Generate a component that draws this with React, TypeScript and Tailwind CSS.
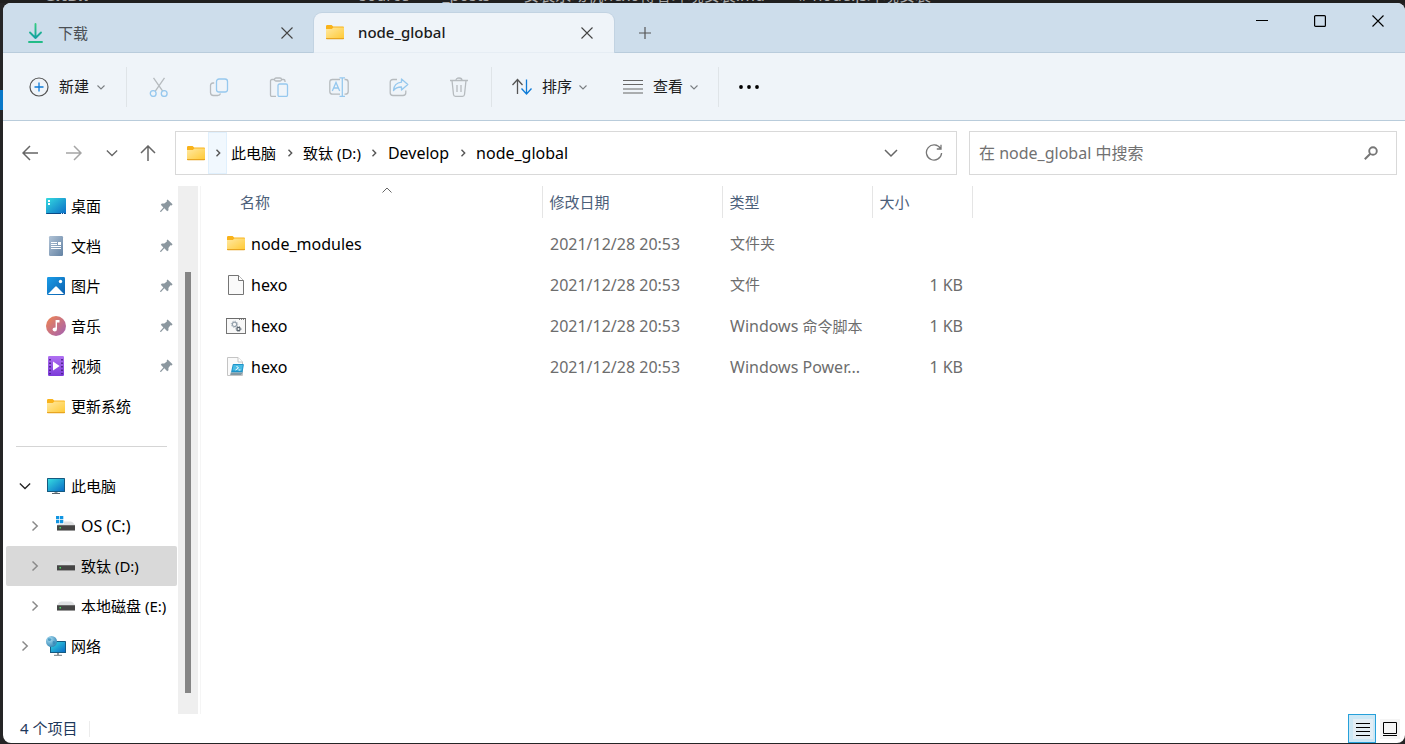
import React from 'react';

interface IconProps {
  className?: string;
}

interface PlaceItem {
  label: string;
  icon: React.ReactNode;
  pinned?: boolean;
  latin?: boolean;
}

interface TreeItem extends PlaceItem {
  level: number;
  open?: boolean;
  selected?: boolean;
}

interface FileRow {
  name: string;
  icon: React.ReactNode;
  date: string;
  type: React.ReactNode;
  size: string;
}

function FolderIcon({ className = '' }: IconProps) {
  return (
    <svg width="18" height="15" viewBox="0 0 18 15" className={`shrink-0 ${className}`}>
      <defs>
        <linearGradient id="folder" x1="0" y1="0" x2="1" y2="1">
          <stop offset="0" stopColor="#ffe9a3" />
          <stop offset="1" stopColor="#ffc933" />
        </linearGradient>
      </defs>
      <path d="M0 1.2Q0 0 1.2 0H5.6L7.2 1.4H17Q18 1.4 18 2.4V6H0Z" fill="#f9b31b" />
      <path d="M0 4H5.8L7.4 2.4H18V14H0Z" fill="url(#folder)" />
      <path d="M0 13h18v.6q0 .6-.8.6H.8Q0 14.200 0 13.600Z" fill="#e8a520" />
    </svg>
  );
}

function DownloadIcon() {
  return (
    <svg width="16" height="20" viewBox="0 0 16 20" fill="none" className="shrink-0">
      <defs>
        <linearGradient id="down" x1="0" y1="0" x2="0" y2="20" gradientUnits="userSpaceOnUse">
          <stop offset="0" stopColor="#37cf7f" />
          <stop offset=".75" stopColor="#12a0a0" />
          <stop offset="1" stopColor="#26c281" />
        </linearGradient>
      </defs>
      <path d="M7.500 1V15M2 9.500L7.500 15L13 9.500M1 19H14" stroke="url(#down)" strokeWidth="1.900" strokeLinecap="round" strokeLinejoin="round" />
    </svg>
  );
}

function CloseIcon({ className = '' }: IconProps) {
  return (
    <svg width="12" height="12" viewBox="0 0 12 12" className={className}>
      <path d="M.5.5L11.500 11.500M11.500.5L.5 11.500" stroke="currentColor" strokeWidth="1.100" fill="none" />
    </svg>
  );
}

function SmallChevron() {
  return (
    <svg width="10" height="10" viewBox="0 0 10 10" fill="none">
      <path d="M1.500 3.500L5 7L8.500 3.500" stroke="#7b7f83" strokeWidth="1.100" />
    </svg>
  );
}

function ChevronDown({ className = '' }: IconProps) {
  return (
    <svg width="14" height="14" viewBox="0 0 14 14" fill="none" className={className}>
      <path d="M1 4L7 10L13 4" stroke="currentColor" strokeWidth="1.500" />
    </svg>
  );
}

function ChevronRight({ className = '' }: IconProps) {
  return (
    <svg width="10" height="12" viewBox="0 0 10 12" fill="none" className={className}>
      <path d="M2.500 1.500L7.200 6L2.500 10.500" stroke="currentColor" strokeWidth="1.500" />
    </svg>
  );
}

function CrumbChevron() {
  return (
    <svg width="8" height="8" viewBox="0 0 8 8" fill="none">
      <path d="M2.500 .8L5.700 4L2.500 7.200" stroke="#555" strokeWidth="1.400" />
    </svg>
  );
}

function PinIcon() {
  return (
    <svg width="13" height="14" viewBox="0 0 13 14" className="shrink-0">
      <path d="M7.600 .6L12.600 5.200L11.600 6.400L10.400 6.300L8.400 9L8.500 11.200L7.200 12.200L4.300 9.300L1 13L.2 12.900L.2 12.100L3.400 8.500L.8 5.800L1.900 4.600L4.300 4.500L6.900 2.600L6.700 1.500Z" fill="#8b979f" />
    </svg>
  );
}

function DesktopIcon() {
  return (
    <svg width="20" height="20" viewBox="0 0 20 20">
      <defs>
        <linearGradient id="desk" x1="0" y1="0" x2="1" y2="1">
          <stop offset="0" stopColor="#35dbe0" />
          <stop offset="1" stopColor="#0a6cc6" />
        </linearGradient>
      </defs>
      <rect y="2" width="20" height="16" rx="1" fill="url(#desk)" />
      <path d="M0 17H20q0 1-1 1H1q-1 0-1-1Z" fill="#0b4a86" />
      <path d="M2 4h2v2H2zM2 7h2v2H2z" fill="#fff" />
      <path d="M15 17h1v1h-1zM17 17h1v1h-1z" fill="#cfe6ff" />
    </svg>
  );
}

function DocumentsIcon() {
  return (
    <svg width="20" height="20" viewBox="0 0 20 20">
      <defs>
        <linearGradient id="docs" x1="0" y1="0" x2="1" y2="1">
          <stop offset="0" stopColor="#b1c3d6" />
          <stop offset="1" stopColor="#6382a3" />
        </linearGradient>
      </defs>
      <rect x="3" width="14" height="20" rx="1.200" fill="url(#docs)" />
      <path d="M5 6h6v1H5zM5 8h6v1H5zM12 6h3v3h-3zM5 10h10v1H5zM5 12h10v1H5z" fill="#fff" />
    </svg>
  );
}

function PicturesIcon() {
  return (
    <svg width="20" height="20" viewBox="0 0 20 20">
      <defs>
        <linearGradient id="pics" x1="0" y1="0" x2="1" y2="1">
          <stop offset="0" stopColor="#1a9ce8" />
          <stop offset="1" stopColor="#0b60ae" />
        </linearGradient>
      </defs>
      <rect x="1" y="1" width="18" height="18" rx="1.200" fill="url(#pics)" />
      <circle cx="14.500" cy="5.500" r="1.700" fill="#fff" />
      <path d="M2 18L9.200 10.700Q10 10 10.800 10.700L18 18Z" fill="#fff" />
    </svg>
  );
}

function MusicIcon() {
  return (
    <svg width="20" height="20" viewBox="0 0 20 20">
      <defs>
        <linearGradient id="music" x1="0" y1="0" x2="1" y2="1">
          <stop offset="0" stopColor="#f1854f" />
          <stop offset="1" stopColor="#a160b4" />
        </linearGradient>
      </defs>
      <circle cx="10" cy="10" r="10" fill="url(#music)" />
      <path d="M9.600 4H13.500V6.400H11V13Q11 15.500 8.600 15.500Q6.500 15.400 6.500 13.300Q6.700 11.200 9.600 11.400Z" fill="#fff" />
    </svg>
  );
}

function VideosIcon() {
  return (
    <svg width="20" height="20" viewBox="0 0 20 20">
      <defs>
        <linearGradient id="video" x1="0" y1="0" x2="0" y2="1">
          <stop offset="0" stopColor="#b070f2" />
          <stop offset="1" stopColor="#7c3bd9" />
        </linearGradient>
      </defs>
      <rect x="2" width="16" height="20" rx="1.200" fill="url(#video)" />
      <path d="M3.200 3h1.600v1.600H3.200zM3.200 6.500h1.600v1.600H3.200zM3.200 10h1.600v1.600H3.200zM3.200 13.500h1.600v1.600H3.200zM3.200 17h1.600v1.200H3.200zM15.200 3h1.600v1.600h-1.600zM15.200 6.500h1.600v1.600h-1.600zM15.200 10h1.600v1.600h-1.600zM15.200 13.500h1.600v1.600h-1.600zM15.200 17h1.600v1.200h-1.600z" fill="#42207c" />
      <path d="M7 5.500V14.500L13.700 10Z" fill="#fff" />
    </svg>
  );
}

function ComputerIcon() {
  return (
    <svg width="20" height="20" viewBox="0 0 20 20">
      <rect x="1" y="2" width="18" height="14" rx=".6" fill="#155a80" />
      <rect x="2" y="3" width="16" height="12" fill="url(#desk)" />
      <path d="M8.500 16h3v1h-3z" fill="#8b9499" />
      <path d="M6 17h8v1H6z" fill="#59646b" />
    </svg>
  );
}

function DriveIcon({ system = false }: { system?: boolean }) {
  return (
    <svg width="20" height="20" viewBox="0 0 20 20">
      <path d="M5 5.500H15Q17 5.500 19 9V10H1V9Q3 5.500 5 5.500Z" fill="#dfe1e3" />
      <rect x="1" y="9" width="18" height="5" fill="#454545" />
      <path d="M1 9h18v1H1z" fill="#6a6a6a" />
      <path d="M1 14h18v1H1z" fill="#999" />
      <rect x="3.500" y="11" width="1.500" height="1.500" fill="#4cd964" />
      {system && (
        <>
          <rect width="8" height="8" fill="#fff" />
          <path d="M0 0h3.300v3.300H0zM4 0h3.300v3.300H4zM0 4h3.300v3.300H0zM4 4h3.300v3.300H4z" fill="#1195e2" />
        </>
      )}
    </svg>
  );
}

function NetworkIcon() {
  return (
    <svg width="20" height="20" viewBox="0 0 20 20">
      <defs>
        <radialGradient id="globe" cx=".35" cy=".3" r=".8">
          <stop offset="0" stopColor="#a9def3" />
          <stop offset="1" stopColor="#2b7fb0" />
        </radialGradient>
      </defs>
      <rect x="4" y="5" width="16" height="12" rx=".6" fill="#155a80" />
      <rect x="5" y="6" width="14" height="10" fill="url(#desk)" />
      <path d="M11 17h2v2h-2zM8 18.800h8V20H8z" fill="#8b9499" />
      <circle cx="5.500" cy="5.500" r="5.500" fill="url(#globe)" />
      <path d="M2 2.500Q4.500 1.500 5.500 3.500Q4.500 5.500 3 5Q1.500 4.500 2 2.500ZM7 5Q9.500 4.500 9.500 6.500Q8.500 9 7 8.500Q6 7 7 5Z" fill="#2d86b5" opacity=".7" />
    </svg>
  );
}

function BlankFileIcon() {
  return (
    <svg width="20" height="20" viewBox="0 0 20 20">
      <path d="M2.500.5H12.500L17.500 5.500V19.500H2.500Z" fill="#fafafa" stroke="#757575" />
      <path d="M12.500.5V5.500H17.500" fill="#fff" stroke="#757575" />
    </svg>
  );
}

function ScriptIcon() {
  return (
    <svg width="20" height="20" viewBox="0 0 20 20" fill="none">
      <rect x=".5" y="2.500" width="19" height="15" fill="#f8f8f8" stroke="#757575" />
      <path d="M0 2.500H20" stroke="#6b6b6b" />
      <path d="M13 3.500H19" stroke="#888" strokeDasharray="1 1" />
      <circle cx="8.500" cy="8.300" r="2.200" stroke="#94a0ab" strokeWidth="1.200" />
      <circle cx="8.500" cy="8.300" r="3.200" stroke="#94a0ab" strokeWidth=".8" strokeDasharray="1.200 1.300" />
      <circle cx="12.500" cy="13" r="1.600" stroke="#56616b" strokeWidth="1.200" />
      <circle cx="12.500" cy="13" r="2.500" stroke="#56616b" strokeWidth=".8" strokeDasharray="1 1" />
    </svg>
  );
}

function PowerShellIcon() {
  return (
    <svg width="20" height="20" viewBox="0 0 20 20">
      <path d="M1.500.5H12L16.500 5V18.500H1.500Z" fill="#fafafa" stroke="#c4c4c4" />
      <path d="M12 .5V5H16.500" fill="#fff" stroke="#c4c4c4" />
      <path d="M7.500 7H17Q18 7 17.800 8L16.500 15.500H5L6.600 8Q6.800 7 7.500 7Z" fill="#1d93c8" />
      <path d="M7.500 8H16.800L16 13.500H6.500Z" fill="#48bbe4" />
      <path d="M10.500 9L12.500 11L9.500 13M12.500 13H14.500" stroke="#fff" strokeWidth="1" fill="none" />
      <path d="M4.700 15.500H16.500L15.500 18H4.200Z" fill="#8299a4" />
    </svg>
  );
}

const places: PlaceItem[] = [
  { label: '桌面', icon: <DesktopIcon />, pinned: true },
  { label: '文档', icon: <DocumentsIcon />, pinned: true },
  { label: '图片', icon: <PicturesIcon />, pinned: true },
  { label: '音乐', icon: <MusicIcon />, pinned: true },
  { label: '视频', icon: <VideosIcon />, pinned: true },
  { label: '更新系统', icon: <FolderIcon className="mx-px" /> },
];

const tree: TreeItem[] = [
  { label: '此电脑', icon: <ComputerIcon />, level: 0, open: true },
  { label: 'OS (C:)', icon: <DriveIcon system />, level: 1, latin: true },
  { label: '致钛 (D:)', icon: <DriveIcon />, level: 1, selected: true },
  { label: '本地磁盘 (E:)', icon: <DriveIcon />, level: 1 },
  { label: '网络', icon: <NetworkIcon />, level: 0 },
];

const files: FileRow[] = [
  { name: 'node_modules', icon: <FolderIcon className="mx-px" />, date: '2021/12/28 20:53', type: '文件夹', size: '' },
  { name: 'hexo', icon: <BlankFileIcon />, date: '2021/12/28 20:53', type: '文件', size: '1 KB' },
  {
    name: 'hexo',
    icon: <ScriptIcon />,
    date: '2021/12/28 20:53',
    type: (
      <>
        <span className="text-base">Windows </span>命令脚本
      </>
    ),
    size: '1 KB',
  },
  {
    name: 'hexo',
    icon: <PowerShellIcon />,
    date: '2021/12/28 20:53',
    type: <span className="text-base">Windows Power...</span>,
    size: '1 KB',
  },
];

const crumbs = ['此电脑', '致钛 (D:)', 'Develop', 'node_global'];

// Cut, copy, paste, rename, share and delete
const actions: { label: string; icon: React.ReactNode }[] = [
  {
    label: '剪切',
    icon: (
      <>
        <path d="M4.500 .8L13.700 14.200M15.500 .8L6.300 14.200" stroke="#b6bbbf" />
        <circle cx="4.200" cy="16.500" r="2.900" stroke="#96c8ee" />
        <circle cx="15.200" cy="16.500" r="2.900" stroke="#96c8ee" />
      </>
    ),
  },
  {
    label: '复制',
    icon: (
      <>
        <path d="M5.200 6H4Q1.500 6 1.500 8.500V15.500Q1.500 18.500 4.500 18.500H8.500Q11 18.500 11.500 16.500" stroke="#b6bbbf" />
        <rect x="7.500" y="2" width="11" height="13" rx="2.500" stroke="#96c8ee" />
      </>
    ),
  },
  {
    label: '粘贴',
    icon: (
      <>
        <path d="M5.500 2.500H3Q1.500 2.500 1.500 4V18Q1.500 19.500 3 19.500H7M12.500 2.500H14.500Q16 2.500 16 4V5" stroke="#b6bbbf" />
        <rect x="5.500" y="1" width="7" height="3" rx="1.500" stroke="#b6bbbf" />
        <rect x="9" y="7" width="9.500" height="12.500" rx="1.500" stroke="#96c8ee" />
      </>
    ),
  },
  {
    label: '重命名',
    icon: (
      <>
        <path d="M11 2.500H3.500Q.8 2.500 .8 5.200V14.500Q.8 17.200 3.500 17.200H11M15.500 2.500H16.500Q19.200 2.500 19.200 5.200V14.500Q19.200 17.200 16.500 17.200H15.500" stroke="#b6bbbf" />
        <path d="M3.300 14L7 5.500L10.700 14M4.600 11H9.400M10.500 .8H16M10.500 19.500H16M13.300 .8V19.500" stroke="#96c8ee" />
      </>
    ),
  },
  {
    label: '共享',
    icon: (
      <>
        <path d="M8 2.500H4Q1.200 2.500 1.200 5.300V15.700Q1.200 18.500 4 18.500H14Q16.800 18.500 16.800 15.700V13.500" stroke="#b6bbbf" />
        <path d="M12.500 2L18.800 7.500L12.500 13V10Q7.500 9.800 4.500 13.500Q5 6 12.500 5.200Z" stroke="#96c8ee" strokeLinejoin="round" />
      </>
    ),
  },
  {
    label: '删除',
    icon: (
      <path d="M1 3.500H19M7 3.500Q7 1 10 1Q13 1 13 3.500M3 3.500L4.500 17.500Q4.700 19.300 6.500 19.300H13.500Q15.300 19.300 15.500 17.500L17 3.500M8 8V15M12 8V15" stroke="#b6bbbf" />
    ),
  },
];

function Divider() {
  return <div className="mx-[2px] h-10 w-px shrink-0 bg-[#dfe4e8]" />;
}

function TitleBar() {
  return (
    <div className="relative flex h-[50px] shrink-0 items-end border-b border-[#b9ccdc] bg-[#cdddeb]">
      <div className="-mb-px flex h-10 w-[311px] items-center pr-[21px] pl-[25px]">
        <DownloadIcon />
        <span className="ml-[14px] flex-1 text-[15px] text-[#4a4f54]">下载</span>
        <button aria-label="关闭标签页" className="text-[#444]">
          <CloseIcon />
        </button>
      </div>
      <div className="relative -mb-px flex h-10 w-[300px] items-center rounded-t-lg border-b border-[#e6edf4] bg-[#eff4f9] pr-[21px] pl-3 shadow-[0_0_0_1px_#c2d3e2] [clip-path:inset(-1px_-1px_0_-1px)]">
        <FolderIcon />
        <span className="ml-[14px] flex-1 text-[15px] font-medium text-[#1b1b1b]">node_global</span>
        <button aria-label="关闭标签页" className="text-[#444]">
          <CloseIcon />
        </button>
      </div>
      <button aria-label="新标签页" className="-mb-px flex h-10 w-[62px] items-center justify-center">
        <svg width="12" height="12" viewBox="0 0 12 12">
          <path d="M6 0V12M0 6H12" stroke="#555" strokeWidth="1.200" />
        </svg>
      </button>
      <div className="-mr-[2px] ml-auto flex h-9 self-start">
        <button aria-label="最小化" className="flex w-[58px] items-center justify-center">
          <svg width="12" height="12" viewBox="0 0 12 12">
            <path d="M0 5.500H12" stroke="#000" />
          </svg>
        </button>
        <button aria-label="最大化" className="flex w-[58px] items-center justify-center">
          <svg width="12" height="12" viewBox="0 0 12 12">
            <rect x=".6" y=".6" width="10.800" height="10.800" rx="1" stroke="#000" strokeWidth="1.200" fill="none" />
          </svg>
        </button>
        <button aria-label="关闭" className="flex w-[58px] items-center justify-center text-black">
          <CloseIcon />
        </button>
      </div>
    </div>
  );
}

function Toolbar() {
  return (
    <div className="flex h-[68px] shrink-0 items-center border-b border-[#b9ccdb] bg-[#eff4f9] pl-2 text-[15px] text-[#1b1b1b]">
      <button className="flex h-10 items-center px-[18px]">
        <svg width="20" height="20" viewBox="0 0 20 20" fill="none" className="mr-[10px]">
          <circle cx="10" cy="10" r="9" stroke="#555" strokeWidth="1.200" />
          <path d="M10 5.500V14.500M5.500 10H14.500" stroke="#0f7bd7" strokeWidth="1.300" />
        </svg>
        <span className="mr-[7px]">新建</span>
        <SmallChevron />
      </button>
      <Divider />
      {actions.map((action) => (
        <button key={action.label} aria-label={action.label} className="flex h-10 w-[60px] items-center justify-center">
          <svg width="20" height="20" viewBox="0 0 20 20" fill="none" strokeWidth="1.300">
            {action.icon}
          </svg>
        </button>
      ))}
      <Divider />
      <button className="flex h-10 items-center pr-[17px] pl-[18px]">
        <svg width="20" height="20" viewBox="0 0 20 20" fill="none" strokeWidth="1.300" className="mr-[10px]">
          <path d="M5.500 17V2.500M.5 8L5.500 2.500L10.500 8" stroke="#555" />
          <path d="M14.500 2.500V17M9.500 11.500L14.500 17L19.500 11.500" stroke="#0f7bd7" />
        </svg>
        <span className="mr-[6px]">排序</span>
        <SmallChevron />
      </button>
      <button className="flex h-10 items-center pr-[17px] pl-[18px]">
        <svg width="20" height="20" viewBox="0 0 20 20" className="mr-[10px]">
          <path d="M0 3.500H20M0 7.500H20M0 12H20M0 16H20" stroke="#666" strokeWidth="1.200" />
        </svg>
        <span className="mr-[6px]">查看</span>
        <SmallChevron />
      </button>
      <Divider />
      <button aria-label="查看更多" className="flex h-10 items-center px-[18px]">
        <svg width="20" height="4" viewBox="0 0 20 4">
          <circle cx="2" cy="2" r="1.900" />
          <circle cx="10" cy="2" r="1.900" />
          <circle cx="18" cy="2" r="1.900" />
        </svg>
      </button>
    </div>
  );
}

function AddressRow() {
  return (
    <div className="flex shrink-0 items-center py-[10px] pr-2 pl-[5px] text-[#666]">
      <button aria-label="后退" className="flex h-10 w-11 items-center justify-center">
        <svg width="16" height="16" viewBox="0 0 16 16" fill="none" stroke="currentColor" strokeWidth="1.500">
          <path d="M16 8H1M8 1L1 8L8 15" />
        </svg>
      </button>
      <button aria-label="前进" className="flex h-10 w-11 items-center justify-center text-[#a5a5a5]">
        <svg width="16" height="16" viewBox="0 0 16 16" fill="none" stroke="currentColor" strokeWidth="1.500">
          <path d="M0 8H15M8 1L15 8L8 15" />
        </svg>
      </button>
      <button aria-label="最近浏览的位置" className="flex h-10 w-8 items-center justify-center">
        <ChevronDown className="h-3 w-3" />
      </button>
      <button aria-label="上移" className="flex h-10 w-10 items-center justify-center">
        <svg width="16" height="16" viewBox="0 0 16 16" fill="none" stroke="currentColor" strokeWidth="1.500">
          <path d="M8 16V1M1 8L8 1L15 8" />
        </svg>
      </button>
      <nav aria-label="地址" className="ml-[7px] flex h-11 min-w-0 flex-1 items-center border border-[#d9d9d9] bg-white pl-[11px] text-black">
        <FolderIcon className="mr-[3px]" />
        {crumbs.map((crumb, idx) => (
          <React.Fragment key={crumb}>
            <span className={`flex h-[42px] w-[19px] shrink-0 items-center justify-center ${idx === 0 ? 'border border-[#e0f0fd] bg-[#f1f8fe]' : ''}`}>
              <CrumbChevron />
            </span>
            <a href="#" className={`px-1 whitespace-nowrap ${idx > 1 ? 'text-base' : 'text-[15px]'}`}>
              {crumb}
            </a>
          </React.Fragment>
        ))}
        <button aria-label="以前的位置" className="ml-auto flex w-[42px] justify-center text-[#666]">
          <ChevronDown />
        </button>
        <button aria-label="刷新" className="flex w-11 justify-center text-[#777]">
          <svg width="18" height="18" viewBox="0 0 18 18" fill="none" stroke="currentColor" strokeWidth="1.300">
            <path d="M15.500 4.500A7.600 7.600 0 1 0 16.600 9M16 .8V5H11.800" />
          </svg>
        </button>
      </nav>
      <label className="ml-3 flex h-11 w-[428px] items-center border border-[#d9d9d9] bg-white pr-[18px] pl-[9px]">
        <input
          aria-label="搜索"
          placeholder="在 node_global 中搜索"
          className="min-w-0 flex-1 bg-transparent text-base outline-none placeholder:text-[#717171]"
        />
        <svg width="14" height="14" viewBox="0 0 14 14" fill="none" stroke="#777">
          <circle cx="9" cy="5" r="3.800" strokeWidth="1.900" />
          <path d="M6.300 7.700L.8 13.200" strokeWidth="2" />
        </svg>
      </label>
    </div>
  );
}

function Sidebar() {
  return (
    <aside className="flex shrink-0 border-r border-[#f5f5f5] pr-[2px]">
      <div className="w-[175px] pr-px pl-[3px] text-[15px] text-black">
        {places.map((place) => (
          <button key={place.label} className="flex h-10 w-full items-center gap-[5px] pr-1 pl-10">
            {place.icon}
            <span className="flex-1 text-left">{place.label}</span>
            {place.pinned && <PinIcon />}
          </button>
        ))}
        <div className="mr-[10px] ml-[10px] flex h-10 items-center">
          <hr className="w-full border-[#d5d5d5]" />
        </div>
        {tree.map((item) => (
          <button
            key={item.label}
            className={`flex h-10 w-full items-center rounded-[2px] ${item.level === 1 ? 'pl-[19px]' : 'pl-[9px]'} ${item.selected ? 'bg-[#d9d9d9]' : ''}`}
          >
            <span className="mr-[11px] flex w-5 shrink-0 justify-center">
              {item.open ? <ChevronDown className="h-3 w-3 text-[#222]" /> : <ChevronRight className="text-[#8a8a8a]" />}
            </span>
            <span className="mr-[5px] shrink-0">{item.icon}</span>
            <span className={`whitespace-nowrap ${item.latin ? 'text-base' : ''}`}>{item.label}</span>
          </button>
        ))}
      </div>
      <div className="flex w-5 flex-col items-center bg-[#efefef] pt-[86px] pb-[21px]">
        <div className="w-[6px] flex-1 bg-[#858585]" />
      </div>
    </aside>
  );
}

function FileList() {
  return (
    <main className="min-w-0 flex-1 overflow-hidden">
      <table className="w-[771px] table-fixed text-left text-[#6d6d6d]">
        <thead className="text-[15px] text-[#4c607a]">
          <tr className="h-8">
            <th className="relative w-[341px] border-r border-[#e5e5e5] pl-[39px] font-normal">
              名称
              <svg width="10" height="6" viewBox="0 0 10 6" fill="none" className="absolute top-px left-[181px]">
                <path d="M.5 5.500L5 1L9.500 5.500" stroke="#666" />
              </svg>
            </th>
            <th className="w-[180px] border-r border-[#e5e5e5] pl-[7px] font-normal">修改日期</th>
            <th className="w-[150px] border-r border-[#e5e5e5] pl-[7px] font-normal">类型</th>
            <th className="w-[100px] border-r border-[#e5e5e5] pl-[7px] font-normal">大小</th>
          </tr>
        </thead>
        <tbody className="before:block before:h-[5px]">
          {files.map((file, idx) => (
            <tr key={idx} className="h-[41px]">
              <td className="pl-[25px] text-base text-black">
                <div className="flex items-center gap-[5px]">
                  {file.icon}
                  <span>{file.name}</span>
                </div>
              </td>
              <td className="pl-2 text-base">{file.date}</td>
              <td className="pl-2 text-[15px] whitespace-nowrap">{file.type}</td>
              <td className="pr-[9px] text-right text-base">{file.size}</td>
            </tr>
          ))}
        </tbody>
      </table>
    </main>
  );
}

function StatusBar() {
  return (
    <footer className="flex h-[29px] shrink-0 items-center pr-[5px] pl-[17px] text-[15px] text-[#1e395b]">
      <span>4 个项目</span>
      <div className="ml-3 h-4 w-px bg-[#ececec]" />
      <button aria-label="详细信息" className="ml-auto flex h-full w-7 items-center justify-center border border-[#26a0da] bg-[#cce8f6] pl-px">
        <span className="flex h-5 w-5 items-center justify-center bg-[#e3eef5]">
          <svg width="14" height="14" viewBox="0 0 14 14">
            <path d="M0 1.500H14M0 5.500H14M0 9.500H14M0 13.500H14" stroke="#000" />
          </svg>
        </span>
      </button>
      <button aria-label="大缩略图" className="ml-1 flex h-5 w-5 items-center justify-center bg-[#f5f5f5]">
        <svg width="14" height="14" viewBox="0 0 14 14" fill="none">
          <path d="M.5.5H13.500V11.500H.5ZM0 13.500H14" stroke="#000" />
        </svg>
      </button>
    </footer>
  );
}

export default function App() {
  return (
    <div className="relative flex h-screen overflow-hidden bg-[#252526] pt-[3px] pb-px pl-[3px] font-['Noto_Sans','Noto_Sans_CJK_SC',sans-serif]">
      {/* Editor window showing behind the explorer */}
      <div className="absolute inset-x-0 top-0 flex h-[3px] items-end overflow-hidden bg-[#1f1f1f] text-base leading-4 whitespace-nowrap text-[#a9a9a9]">
        <span className="ml-11 w-[315px] font-bold">GitBk</span>
        <span className="flex gap-3">
          <span>source</span>
          <span>&gt;</span>
          <span>_posts</span>
          <span>&gt;</span>
          <span>安装永动机hexo博客环境安装.md</span>
          <span>&gt;</span>
          <span># node.js环境安装</span>
        </span>
      </div>
      <div className="absolute top-[90px] left-0 h-5 w-[3px] bg-[#0a78c8]" />

      <div className="relative flex min-w-0 flex-1 flex-col overflow-hidden rounded-lg bg-white">
        <TitleBar />
        <Toolbar />
        <AddressRow />
        <div className="flex min-h-0 flex-1 pt-px">
          <Sidebar />
          <FileList />
        </div>
        <StatusBar />
      </div>
    </div>
  );
}
